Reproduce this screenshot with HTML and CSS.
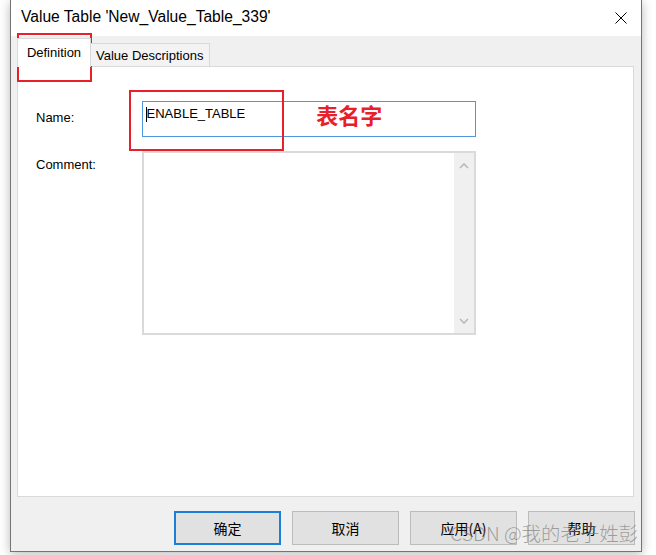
FILE: index.html
```html
<!DOCTYPE html>
<html lang="zh-CN">
<head>
  <meta charset="UTF-8" />
  <meta name="viewport" content="width=device-width, initial-scale=1.0"/>
  <title>Value Table</title>
  <link rel="stylesheet" href="styles.css">
</head>
<body>
<div class="window">
  <div class="titlebar">
    <span class="title">Value Table 'New_Value_Table_339'</span>
    <svg class="close-icon" width="12" height="12" viewBox="0 0 12 12">
      <path d="M0.5 0.5 L11.5 11.5 M11.5 0.5 L0.5 11.5" stroke="#000" stroke-width="1" fill="none"/>
    </svg>
  </div>

  <div class="dialog-body">
    <div class="tabs">
      <div class="tab active">Definition</div>
      <div class="tab">Value Descriptions</div>
    </div>

    <div class="panel">
      <div class="form-row">
        <label class="field-label name-label">Name:</label>
        <div class="text-input">
          <span class="caret"></span><span class="input-text">ENABLE_TABLE</span>
          <span class="note">表名字</span>
        </div>
      </div>
      <div class="form-row comment-row">
        <label class="field-label comment-label">Comment:</label>
        <div class="textarea">
          <div class="scrollbar">
            <svg width="10" height="6" viewBox="0 0 10 6"><path d="M1 5 L5 1 L9 5" stroke="#b8b8b8" stroke-width="1.6" fill="none"/></svg>
            <svg width="10" height="6" viewBox="0 0 10 6"><path d="M1 1 L5 5 L9 1" stroke="#b8b8b8" stroke-width="1.6" fill="none"/></svg>
          </div>
        </div>
      </div>
    </div>

    <div class="button-bar">
      <button class="btn default">确定</button>
      <button class="btn">取消</button>
      <button class="btn">应用(A)</button>
      <button class="btn">帮助</button>
    </div>
  </div>
</div>

<!-- annotations drawn on top of the screenshot -->
<div class="mark mark-tab"></div>
<div class="mark mark-name"></div>
<div class="watermark">CSDN @我的老子姓彭</div>
</body>
</html>
```

FILE: styles.css
```css
body {
  margin: 0;
  background-color: #ffffff;
  font-family: 'Liberation Sans', Arial, 'Noto Sans CJK SC', sans-serif;
  font-size: 13px;
  color: #000;
  width: 656px;
  height: 555px;
  overflow: hidden;
  position: relative;
}

.window {
  margin-left: 10px;
  width: 632px;
  height: 552px;
  box-sizing: border-box;
  border: 1px solid #747474;
  border-top: none;
  background-color: #f0f0f0;
  box-shadow: 0 2px 10px rgba(0, 0, 0, 0.28);
  display: flex;
  flex-direction: column;
}

.titlebar {
  height: 36px;
  flex-shrink: 0;
  background-color: #ffffff;
  display: flex;
  align-items: center;
  justify-content: space-between;
  padding: 0 14px 3px 10px;
  box-sizing: border-box;
}

.title {
  font-size: 15.6px;
}

.close-icon {
  display: block;
  margin-top: 2px;
}

.dialog-body {
  flex: 1;
  display: flex;
  flex-direction: column;
  padding: 2px 7px 0 6px;
}

.tabs {
  display: flex;
  align-items: flex-end;
  height: 28px;
  position: relative;
  z-index: 1;
}

.tab {
  height: 23px;
  box-sizing: border-box;
  padding: 4px 6px 0 5px;
  border: 1px solid #d9d9d9;
  border-left: none;
  border-bottom: none;
  background-color: #f3f3f3;
  line-height: 16px;
  white-space: nowrap;
}

.tab.active {
  width: 74px;
  height: 29px;
  margin-bottom: -1px;
  padding: 6px 0 0 0;
  text-align: center;
  border-left: 1px solid #d9d9d9;
  background-color: #ffffff;
}

.panel {
  height: 431px;
  box-sizing: border-box;
  border: 1px solid #d9d9d9;
  background-color: #ffffff;
  padding: 34px 0 0 18px;
}

.form-row {
  display: flex;
  align-items: flex-start;
}

.comment-row {
  margin-top: 14px;
}

.field-label {
  width: 106px;
  flex-shrink: 0;
  line-height: 15px;
}

.name-label {
  padding-top: 9px;
}

.comment-label {
  padding-top: 6px;
}

.text-input {
  width: 334px;
  height: 36px;
  box-sizing: border-box;
  border: 1px solid #4d98e0;
  padding: 3px 0 0 3px;
  display: flex;
  align-items: flex-start;
  line-height: 18px;
}

.caret {
  width: 1px;
  height: 15px;
  margin-top: 2px;
  margin-right: -0.5px;
  background-color: #000;
}

.note {
  margin-left: 71px;
  font-family: 'Noto Sans CJK SC', sans-serif;
  font-size: 22px;
  font-weight: bold;
  color: #e8202a;
  line-height: 18px;
}

.textarea {
  width: 334px;
  height: 184px;
  box-sizing: border-box;
  border: 2px solid #dadada;
  display: flex;
  justify-content: flex-end;
}

.scrollbar {
  width: 20px;
  background-color: #f0f0f0;
  display: flex;
  flex-direction: column;
  justify-content: space-between;
  align-items: center;
  padding: 10px 0 9px;
}

.scrollbar svg {
  display: block;
}

.button-bar {
  display: flex;
  justify-content: flex-end;
  gap: 11px;
  margin-top: 14px;
  margin-right: -1px;
}

.btn {
  width: 107px;
  height: 34px;
  box-sizing: border-box;
  border: 1px solid #bcbcbc;
  background-color: #e1e1e1;
  font-family: 'Noto Sans CJK SC', sans-serif;
  font-size: 14px;
  color: #000;
  padding: 0;
}

.btn.default {
  border: 2px solid #1a7fd8;
}

.mark {
  position: absolute;
  border: 2px solid #e8202a;
  box-sizing: border-box;
}

.mark-tab {
  left: 17px;
  top: 33px;
  width: 75px;
  height: 49px;
}

.mark-name {
  left: 129px;
  top: 90px;
  width: 155px;
  height: 61px;
}

.watermark {
  position: absolute;
  left: 450px;
  top: 520px;
  font-family: 'Noto Sans CJK SC', sans-serif;
  font-size: 19.4px;
  font-weight: 300;
  color: rgba(110, 110, 110, 0.6);
  white-space: nowrap;
  line-height: 26px;
}
```
